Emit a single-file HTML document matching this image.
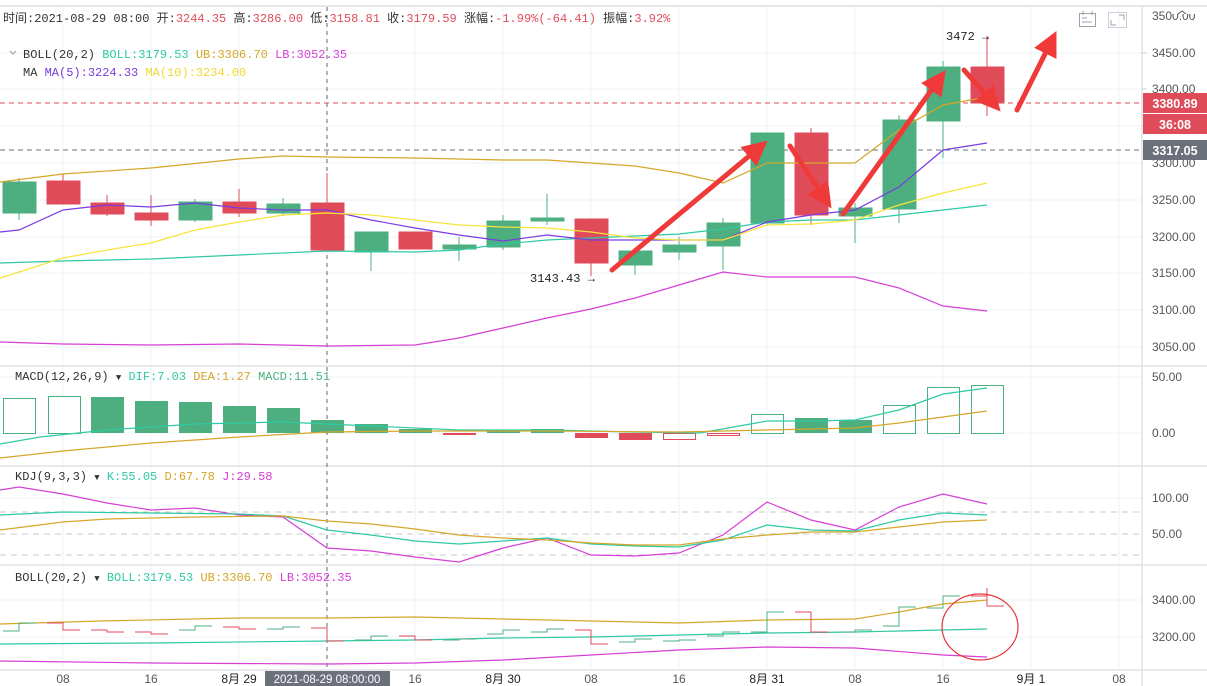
<!DOCTYPE html>
<html><head><meta charset="utf-8"><style>
body{margin:0;background:#fff;width:1207px;height:686px;overflow:hidden;font-family:"Liberation Mono","Noto Sans CJK SC",monospace;}
svg{display:block}
.t{font-family:"Liberation Mono","Noto Sans CJK SC",monospace;font-size:12px}
.ax{font-family:"Liberation Sans","Noto Sans CJK SC",sans-serif;font-size:12px;fill:#555}
</style></head><body>
<svg width="1207" height="686" viewBox="0 0 1207 686">
<defs>
<marker id="ah" viewBox="0 0 10 10" refX="6" refY="5" markerWidth="5" markerHeight="5" orient="auto"><path d="M0,0 L10,5 L0,10 z" fill="#f03a3a"/></marker>
</defs>
<rect width="1207" height="686" fill="#fff"/>
<line x1="0" y1="6" x2="1207" y2="6" stroke="#e3e6ea" stroke-width="2"/>
<g stroke="#eef3f5" stroke-width="1">
<line x1="63" y1="7" x2="63" y2="670"/><line x1="151" y1="7" x2="151" y2="670"/><line x1="239" y1="7" x2="239" y2="670"/>
<line x1="415" y1="7" x2="415" y2="670"/><line x1="503" y1="7" x2="503" y2="670"/><line x1="591" y1="7" x2="591" y2="670"/>
<line x1="679" y1="7" x2="679" y2="670"/><line x1="767" y1="7" x2="767" y2="670"/><line x1="855" y1="7" x2="855" y2="670"/>
<line x1="943" y1="7" x2="943" y2="670"/><line x1="1031" y1="7" x2="1031" y2="670"/><line x1="1119" y1="7" x2="1119" y2="670"/>
</g>
<g stroke="#eef3f5">
<line x1="0" y1="53" x2="1142" y2="53"/><line x1="0" y1="89" x2="1142" y2="89"/><line x1="0" y1="126" x2="1142" y2="126"/>
<line x1="0" y1="163" x2="1142" y2="163"/><line x1="0" y1="200" x2="1142" y2="200"/><line x1="0" y1="237" x2="1142" y2="237"/>
<line x1="0" y1="273" x2="1142" y2="273"/><line x1="0" y1="310" x2="1142" y2="310"/><line x1="0" y1="347" x2="1142" y2="347"/>
<line x1="0" y1="377" x2="1142" y2="377"/><line x1="0" y1="433" x2="1142" y2="433"/>
<line x1="0" y1="498" x2="1142" y2="498"/>
<line x1="0" y1="600" x2="1142" y2="600"/><line x1="0" y1="637" x2="1142" y2="637"/>
</g>
<g stroke="#dfe2e6" stroke-width="1.5">
<line x1="0" y1="366" x2="1207" y2="366"/><line x1="0" y1="466" x2="1207" y2="466"/><line x1="0" y1="565" x2="1207" y2="565"/><line x1="0" y1="670" x2="1207" y2="670"/>
<line x1="1142" y1="7" x2="1142" y2="686"/>
</g>
<g stroke="#c8c8c8" stroke-dasharray="6,5">
<line x1="0" y1="512" x2="1142" y2="512"/><line x1="0" y1="534" x2="1142" y2="534"/><line x1="0" y1="555" x2="1142" y2="555"/>
</g>
<line x1="0" y1="103" x2="1142" y2="103" stroke="#e04b5a" stroke-dasharray="5,4"/>
<line x1="0" y1="150" x2="1142" y2="150" stroke="#6b707a" stroke-dasharray="5,4"/>
<line x1="327" y1="7" x2="327" y2="670" stroke="#5d6775" stroke-dasharray="4,4"/>

<g stroke-width="1">
<g fill="#4daf80" stroke="#4daf80">
<line x1="19" y1="178" x2="19" y2="220"/><rect x="3" y="182" width="33" height="31"/>
<line x1="195" y1="199" x2="195" y2="222"/><rect x="179" y="202" width="33" height="18"/>
<line x1="283" y1="198" x2="283" y2="216"/><rect x="267" y="204" width="33" height="9"/>
<line x1="371" y1="232" x2="371" y2="271"/><rect x="355" y="232" width="33" height="20"/>
<line x1="459" y1="237" x2="459" y2="261"/><rect x="443" y="245" width="33" height="4"/>
<line x1="503" y1="215" x2="503" y2="250"/><rect x="487" y="221" width="33" height="26"/>
<line x1="547" y1="194" x2="547" y2="225"/><rect x="531" y="218" width="33" height="3"/>
<line x1="635" y1="251" x2="635" y2="275"/><rect x="619" y="251" width="33" height="14"/>
<line x1="679" y1="237" x2="679" y2="260"/><rect x="663" y="245" width="33" height="7"/>
<line x1="723" y1="218" x2="723" y2="270"/><rect x="707" y="223" width="33" height="23"/>
<line x1="767" y1="133" x2="767" y2="225"/><rect x="751" y="133" width="33" height="90"/>
<line x1="855" y1="203" x2="855" y2="243"/><rect x="839" y="208" width="33" height="8"/>
<line x1="899" y1="115" x2="899" y2="223"/><rect x="883" y="120" width="33" height="89"/>
<line x1="943" y1="61" x2="943" y2="158"/><rect x="927" y="67" width="33" height="54"/>
</g>
<g fill="#e04b5a" stroke="#e04b5a">
<line x1="63" y1="174" x2="63" y2="204"/><rect x="47" y="181" width="33" height="23"/>
<line x1="107" y1="195" x2="107" y2="216"/><rect x="91" y="203" width="33" height="11"/>
<line x1="151" y1="195" x2="151" y2="226"/><rect x="135" y="213" width="33" height="7"/>
<line x1="239" y1="189" x2="239" y2="217"/><rect x="223" y="202" width="33" height="11"/>
<line x1="327" y1="173" x2="327" y2="252"/><rect x="311" y="203" width="33" height="47"/>
<line x1="415" y1="232" x2="415" y2="249"/><rect x="399" y="232" width="33" height="17"/>
<line x1="591" y1="219" x2="591" y2="276"/><rect x="575" y="219" width="33" height="44"/>
<line x1="811" y1="128" x2="811" y2="225"/><rect x="795" y="133" width="33" height="82"/>
<line x1="987" y1="36" x2="987" y2="116"/><rect x="971" y="67" width="33" height="36"/>
</g>
</g>
<g fill="none" stroke-width="1.2">
<polyline stroke="#d4a62a" points="0,182 63,174 151,168 239,159 283,156 327,157 415,158 503,160 547,160 591,163 635,166 679,173 723,183 767,163 811,163 855,163 899,130 943,105 987,97"/>
<polyline stroke="#2fc9a4" points="0,263 63,261 151,259 239,255 327,251 415,252 459,250 503,244 547,240 591,238 635,236 679,234 723,229 767,222 811,220 855,220 899,215 943,210 987,205"/>
<polyline stroke="#d63ed6" points="0,342 63,344 151,345 239,344 327,346 415,345 459,338 503,328 547,318 591,309 635,298 679,285 723,272 767,277 811,277 855,277 899,288 943,306 987,311"/>
<polyline stroke="#7a3be0" points="0,232 19,230 63,210 107,205 151,207 195,203 239,208 283,210 327,210 371,220 415,228 459,235 503,241 547,235 591,240 635,240 679,240 723,240 767,222 811,215 855,210 899,187 943,150 987,143"/>
<polyline stroke="#f5e43a" points="0,278 63,258 107,250 151,243 195,230 239,222 283,215 327,213 371,215 415,220 459,225 503,227 547,228 591,232 635,238 679,240 723,240 767,225 811,224 855,220 899,205 943,193 987,183"/>
</g>
<text x="530" y="282" class="t" fill="#222">3143.43 →</text>
<text x="946" y="40" class="t" fill="#222" font-size="11">3472 →</text>
<g stroke="#f03a3a" stroke-width="5" stroke-linecap="round" fill="none" marker-end="url(#ah)">
<line x1="612" y1="270" x2="760" y2="147"/>
<line x1="790" y1="146" x2="826" y2="200"/>
<line x1="843" y1="214" x2="940" y2="78"/>
<line x1="964" y1="70" x2="994" y2="104"/>
<line x1="1017" y1="110" x2="1052" y2="40"/>
</g>

<g stroke="#4daf80" fill="#fff">
<rect x="3.5" y="398.5" width="32" height="35"/><rect x="48.5" y="396.5" width="32" height="37"/>
<rect x="751.5" y="414.5" width="32" height="19"/><rect x="883.5" y="405.5" width="32" height="28"/>
<rect x="927.5" y="387.5" width="32" height="46"/><rect x="971.5" y="385.5" width="32" height="48"/>
</g>
<g fill="#4daf80">
<rect x="91" y="397" width="33" height="36"/><rect x="135" y="401" width="33" height="32"/><rect x="179" y="402" width="33" height="31"/>
<rect x="223" y="406" width="33" height="27"/><rect x="267" y="408" width="33" height="25"/><rect x="311" y="420" width="33" height="13"/>
<rect x="355" y="424" width="33" height="9"/><rect x="399" y="429" width="33" height="4"/><rect x="487" y="430" width="33" height="3"/>
<rect x="531" y="429" width="33" height="4"/>
<rect x="795" y="418" width="33" height="15"/><rect x="839" y="420" width="33" height="13"/>
</g>
<g fill="#e04b5a"><rect x="443" y="433" width="33" height="2"/><rect x="575" y="433" width="33" height="5"/><rect x="619" y="433" width="33" height="7"/></g>
<g stroke="#e04b5a" fill="none"><rect x="663.5" y="433.5" width="32" height="6"/><rect x="707.5" y="433.5" width="32" height="2"/></g>
<g fill="none" stroke-width="1.2">
<polyline stroke="#2fc9a4" points="0,444 40,437 107,430 195,424 283,422 371,426 459,430 547,430 635,432 700,433 767,421 811,421 855,420 899,410 943,394 987,388"/>
<polyline stroke="#d4a62a" points="0,458 63,451 151,443 239,437 327,432 415,431 547,431 679,432 767,430 855,428 899,423 943,417 987,411"/>
</g>
<g fill="none" stroke-width="1.2">
<polyline stroke="#d63ed6" points="0,490 19,487 63,494 107,503 151,510 195,508 239,515 283,517 327,548 371,551 415,557 459,562 503,548 547,538 591,555 635,556 679,553 723,535 767,502 811,520 855,530 899,507 943,494 987,504"/>
<polyline stroke="#2fc9a4" points="0,515 63,512 151,513 239,514 283,516 327,530 371,535 415,541 459,544 503,541 547,538 591,544 635,546 679,547 723,540 767,525 811,530 855,531 899,520 943,513 987,515"/>
<polyline stroke="#d4a62a" points="0,530 63,522 107,519 195,517 283,516 327,521 371,524 415,529 459,535 503,538 547,540 591,543 635,545 679,545 723,539 767,535 811,532 855,532 899,527 943,522 987,520"/>
</g>
<g fill="none" stroke-width="1.2">
<polyline stroke="#d4a62a" points="0,624 100,621 239,618 327,618 415,617 503,619 591,621 679,623 767,620 855,619 899,612 943,604 987,600"/>
<polyline stroke="#2fc9a4" points="0,644 151,643 327,641 415,640 503,638 591,637 679,635 767,633 855,632 943,630 987,629"/>
<polyline stroke="#d63ed6" points="0,661 151,663 327,664 415,663 503,660 591,655 679,650 767,647 855,648 943,655 987,657"/>
</g>
<g stroke-width="1" fill="none">
<path stroke="#4daf80" d="M3,631h16v-8h17M179,630h16v-4h17M267,629h16v-2h17M355,640h16v-4h17M443,640h16v-1h17M487,634h16v-4h17M531,632h16v-3h17M619,642h16v-3h17M663,641h16v-1h17M707,636h16v-4h17M751,632h16v-20h17M839,632h16v-2h17M883,626h16v-19h17M927,608h16v-12h17"/>
<path stroke="#e04b5a" d="M47,623h16v7h17M91,630h16v2h17M135,632h16v2h17M223,627h16v2h17M311,628h16v13h17M399,636h16v4h17M575,630h16v14h17M795,612h16v20h17M971,596h16v10h17M987,588v18"/>
</g>
<ellipse cx="980" cy="627" rx="38" ry="33" fill="none" stroke="#e8353a" stroke-width="1.2"/>

<g class="ax" font-size="12.5">
<text x="1152" y="20">3500.00</text><text x="1152" y="57">3450.00</text><text x="1152" y="93">3400.00</text>
<text x="1152" y="167">3300.00</text><text x="1152" y="204">3250.00</text><text x="1152" y="241">3200.00</text>
<text x="1152" y="277">3150.00</text><text x="1152" y="314">3100.00</text><text x="1152" y="351">3050.00</text>
<text x="1152" y="381">50.00</text><text x="1152" y="437">0.00</text>
<text x="1152" y="502">100.00</text><text x="1152" y="538">50.00</text>
<text x="1152" y="604">3400.00</text><text x="1152" y="641">3200.00</text>
</g>
<g stroke="#ccd" ><line x1="1142" y1="53" x2="1147" y2="53"/><line x1="1142" y1="89" x2="1147" y2="89"/></g>
<path d="M1168,7 L1200,7 L1196,14 L1172,14 Z" fill="#fff"/>
<path d="M1178,14 l4,-3 l4,3" stroke="#555" fill="none"/>
<rect x="1143" y="93" width="64" height="20" fill="#e04b5a"/>
<text x="1175" y="108" text-anchor="middle" fill="#fff" font-family="Liberation Sans" font-weight="bold" font-size="12.5">3380.89</text>
<rect x="1143" y="114" width="64" height="20" fill="#e04b5a"/>
<text x="1175" y="129" text-anchor="middle" fill="#fff" font-family="Liberation Sans" font-weight="bold" font-size="12.5">36:08</text>
<rect x="1143" y="140" width="64" height="20" fill="#6b707a"/>
<text x="1175" y="155" text-anchor="middle" fill="#fff" font-family="Liberation Sans" font-weight="bold" font-size="12.5">3317.05</text>
<g stroke="#9aa3ad" fill="none" stroke-width="1">
<rect x="1079.5" y="13.5" width="16" height="13"/><line x1="1083" y1="11" x2="1083" y2="15"/><line x1="1092" y1="11" x2="1092" y2="15"/>
<line x1="1082" y1="18" x2="1087" y2="18"/><line x1="1082" y1="22" x2="1092" y2="22"/>
<rect x="1108.5" y="12.5" width="18" height="15" stroke="#ccd"/><path d="M1119,15h5v5M1111,20v5h5"/>
</g>

<text x="3" y="22" class="t" fill="#333">时间:2021-08-29 08:00 <tspan fill="#333">开:</tspan><tspan fill="#e04b5a">3244.35</tspan> <tspan>高:</tspan><tspan fill="#e04b5a">3286.00</tspan> <tspan>低:</tspan><tspan fill="#e04b5a">3158.81</tspan> <tspan>收:</tspan><tspan fill="#e04b5a">3179.59</tspan> <tspan>涨幅:</tspan><tspan fill="#e04b5a">-1.99%(-64.41)</tspan> <tspan>振幅:</tspan><tspan fill="#e04b5a">3.92%</tspan></text>
<path d="M10,51 l3,3 l3,-3" stroke="#999" fill="none"/>
<text x="23" y="58" class="t" fill="#333">BOLL(20,2)  <tspan fill="#2fc9a4">BOLL:3179.53</tspan>  <tspan fill="#d4a62a">UB:3306.70</tspan>  <tspan fill="#d63ed6">LB:3052.35</tspan></text>
<text x="23" y="76" class="t" fill="#333">MA  <tspan fill="#7a3be0">MA(5):3224.33</tspan>  <tspan fill="#f0d830">MA(10):3234.00</tspan></text>
<text x="15" y="380" class="t" fill="#333">MACD(12,26,9) <tspan font-size="9">▼</tspan>  <tspan fill="#2fc9a4">DIF:7.03</tspan>  <tspan fill="#d4a62a">DEA:1.27</tspan>  <tspan fill="#4daf80">MACD:11.51</tspan></text>
<text x="15" y="480" class="t" fill="#333">KDJ(9,3,3) <tspan font-size="9">▼</tspan>  <tspan fill="#2fc9a4">K:55.05</tspan>  <tspan fill="#d4a62a">D:67.78</tspan>  <tspan fill="#d63ed6">J:29.58</tspan></text>
<text x="15" y="581" class="t" fill="#333">BOLL(20,2) <tspan font-size="9">▼</tspan>  <tspan fill="#2fc9a4">BOLL:3179.53</tspan>  <tspan fill="#d4a62a">UB:3306.70</tspan>  <tspan fill="#d63ed6">LB:3052.35</tspan></text>

<g class="ax" text-anchor="middle" font-size="11.5">
<text x="63" y="683">08</text><text x="151" y="683">16</text><text x="239" y="683" fill="#222">8月 29</text>
<text x="415" y="683">16</text><text x="503" y="683" fill="#222">8月 30</text><text x="591" y="683">08</text>
<text x="679" y="683">16</text><text x="767" y="683" fill="#222">8月 31</text><text x="855" y="683">08</text>
<text x="943" y="683">16</text><text x="1031" y="683" fill="#222">9月 1</text><text x="1119" y="683">08</text>
</g>
<rect x="265" y="671" width="125" height="15" fill="#6b707a"/>
<text x="327" y="683" text-anchor="middle" fill="#fff" font-family="Liberation Sans" font-size="11.5">2021-08-29 08:00:00</text>
</svg>
</body></html>
